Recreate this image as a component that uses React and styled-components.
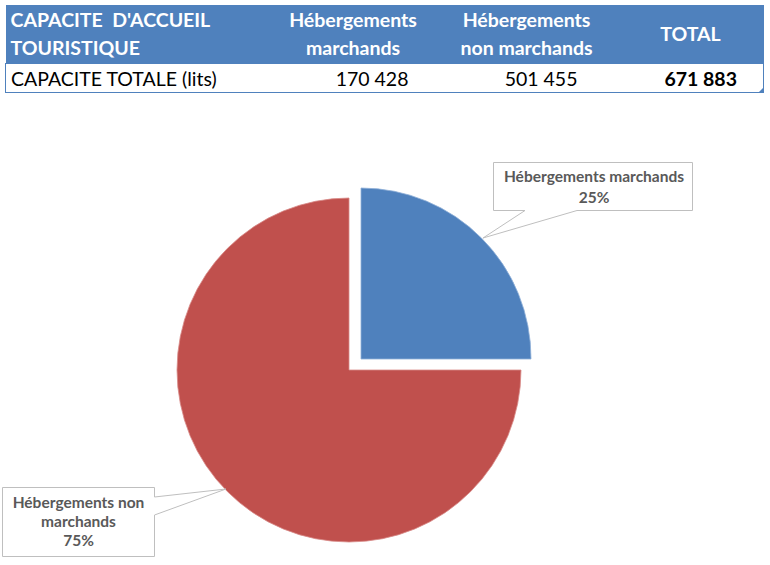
import React from "react";
import styled, { createGlobalStyle } from "styled-components";

const GlobalStyle = createGlobalStyle`
  html, body {
    margin: 0;
    padding: 0;
    background: #ffffff;
  }
  body {
    font-family: Lato, "Open Sans", "Liberation Sans", sans-serif;
  }
`;

const Page = styled.div`
  width: 770px;
  height: 565px;
  overflow: hidden;
  padding-top: 5px;
  box-sizing: border-box;
`;

const Table = styled.table`
  margin-left: 5px;
  width: 758px;
  border-collapse: collapse;
  table-layout: fixed;
`;

const Heading = styled.th`
  background: #4f81bd;
  color: #ffffff;
  font-weight: 700;
  font-size: 19.5px;
  line-height: 28px;
  height: 58px;
  padding: 0 ${({ $padRight }) => $padRight || 0}px 0 ${({ $padLeft }) => $padLeft || 0}px;
  text-align: ${({ $align }) => $align || "center"};
  vertical-align: middle;
  white-space: nowrap;
`;

const Cell = styled.td`
  position: relative;
  height: 28px;
  padding: 0 ${({ $padRight }) => $padRight || 0}px 0 ${({ $padLeft }) => $padLeft || 0}px;
  font-size: 19.5px;
  font-weight: ${({ $bold }) => ($bold ? 700 : 400)};
  color: #000000;
  text-align: ${({ $align }) => $align || "right"};
  border-top: 1px solid #4f81bd;
  border-bottom: 1px solid #4f81bd;
  white-space: nowrap;
  &:first-child {
    border-left: 1px solid #4f81bd;
  }
  &:last-child {
    border-right: 1px solid #4f81bd;
  }
`;

const CornerMark = styled.span`
  position: absolute;
  right: 0;
  bottom: 0;
  width: 0;
  height: 0;
  border-left: 4px solid transparent;
  border-bottom: 4px solid #4f81bd;
`;

const Chart = styled.div`
  position: relative;
  width: 770px;
  height: 470px;
  margin-top: 3px;
`;

const Label = styled.div`
  position: absolute;
  left: ${({ $x }) => $x}px;
  top: ${({ $y }) => $y}px;
  width: ${({ $w }) => $w}px;
  text-align: center;
  font-size: 15.5px;
  font-weight: 700;
  line-height: ${({ $lh }) => $lh}px;
  color: #595959;
  white-space: nowrap;
`;

// chart area starts at page y=97
const OY = 97;

export default function App() {
  return (
    <Page>
      <GlobalStyle />
      <Table>
        <colgroup>
          <col style={{ width: 265 }} />
          <col style={{ width: 165 }} />
          <col style={{ width: 182 }} />
          <col style={{ width: 146 }} />
        </colgroup>
        <thead>
          <tr>
            <Heading $align="left" $padLeft={5}>
              CAPACITE&nbsp; D'ACCUEIL
              <br />
              TOURISTIQUE
            </Heading>
            <Heading>
              Hébergements
              <br />
              marchands
            </Heading>
            <Heading>
              Hébergements
              <br />
              non marchands
            </Heading>
            <Heading>TOTAL</Heading>
          </tr>
        </thead>
        <tbody>
          <tr>
            <Cell $align="left" $padLeft={5}>
              CAPACITE TOTALE (lits)
            </Cell>
            <Cell $padRight={27}>170 428</Cell>
            <Cell $padRight={40}>501 455</Cell>
            <Cell $bold $padRight={26}>
              671 883
              <CornerMark />
            </Cell>
          </tr>
        </tbody>
      </Table>

      <Chart>
        <svg width="770" height="470" viewBox={`0 ${OY} 770 470`}>
          <path
            d="M 349 371 L 349 199 A 172 172 0 1 0 521 371 Z"
            fill="#c0504d"
            stroke="#d88a88"
            strokeWidth="0.8"
          />
          <path
            d="M 361 360 L 361 189 A 170 170 0 0 1 531 360 Z"
            fill="#4f81bd"
            stroke="#8fb0d8"
            strokeWidth="0.8"
          />
          <path
            d="M 493.5 163.5 L 692.5 163.5 L 692.5 211.5 L 577 211.5 L 483 239 L 525 211.5 L 493.5 211.5 Z"
            fill="#ffffff"
            stroke="#bfbfbf"
            strokeWidth="1"
          />
          <path
            d="M 2.5 488.5 L 154.5 488.5 L 154.5 498 L 226 490 L 154.5 516 L 154.5 557.5 L 2.5 557.5 Z"
            fill="#ffffff"
            stroke="#bfbfbf"
            strokeWidth="1"
          />
        </svg>
        <Label $x={494} $y={167 - OY} $w={200} $lh={21}>
          Hébergements marchands
          <br />
          25%
        </Label>
        <Label $x={2} $y={494 - OY} $w={153} $lh={19}>
          Hébergements non
          <br />
          marchands
          <br />
          75%
        </Label>
      </Chart>
    </Page>
  );
}
